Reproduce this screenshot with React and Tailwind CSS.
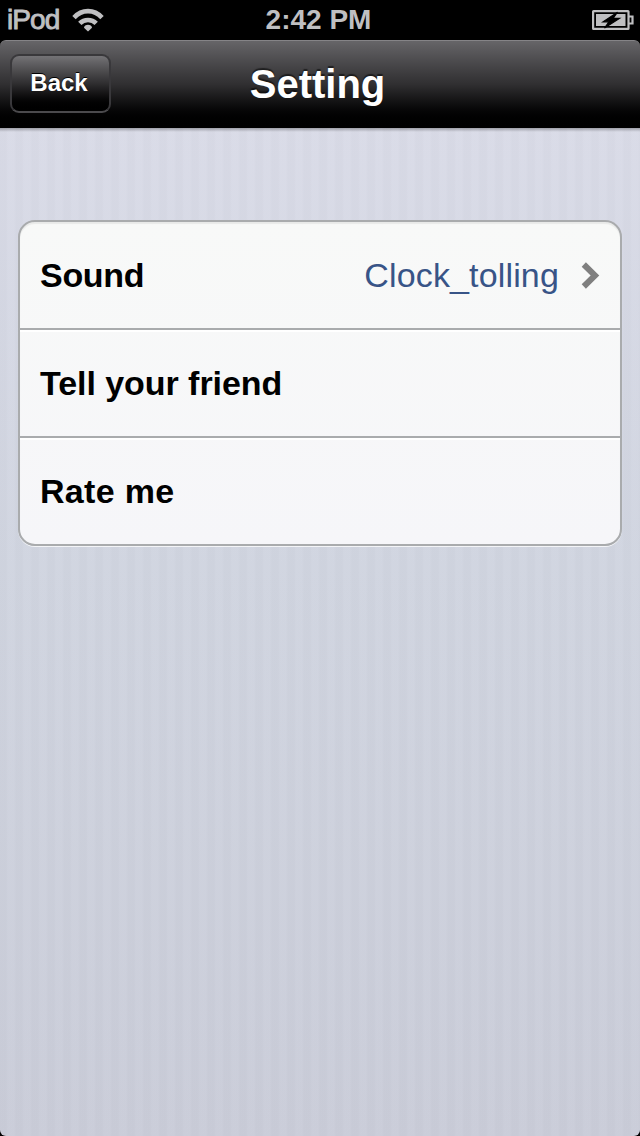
const rows = [
  { label: 'Sound', value: 'Clock_tolling', spacing: 'tracking-[-0.3px]' },
  { label: 'Tell your friend', spacing: 'tracking-[-0.05px]' },
  { label: 'Rate me', spacing: 'tracking-[0.3px]' },
];

function WifiIcon() {
  return (
    <svg width="32" height="24" viewBox="0 0 32 24" fill="none" stroke="#bfbfc1" strokeWidth="4.6">
      <path d="M2 9.6C9.8 1 22.2 1 30 9.6" />
      <path d="M7.8 15.4C12.2 10.8 19.8 10.8 24.2 15.4" />
      <path d="M16 23.6L12 19.8C12 15.6 20 15.6 20 19.8Z" fill="#bfbfc1" stroke="none" />
    </svg>
  );
}

function BatteryIcon() {
  return (
    <svg width="42" height="20" viewBox="0 0 42 20">
      <rect x="1.1" y="1.1" width="35.4" height="17.8" rx="0.5" fill="#000" stroke="#bfbfc1" strokeWidth="2.2" />
      <path d="M37 6.5H40.5V13.5H37" fill="none" stroke="#bfbfc1" strokeWidth="2.2" />
      <rect x="4" y="4" width="29.5" height="12" fill="#bfbfc1" />
      <path d="M25.5 2.2L11 11.8H17L12.5 18L27.5 8.4H21Z" fill="#000" stroke="#000" strokeWidth="1.2" />
    </svg>
  );
}

function StatusBar() {
  return (
    <div className="grid h-10 grid-cols-3 items-center bg-black pl-[7px] pr-[6px] text-[28px] leading-[38px] text-[#bfbfc1]">
      <div className="flex items-center gap-[13px]">
        <span className="tracking-[-0.9px] [-webkit-text-stroke:0.9px_#bfbfc1]">iPod</span>
        <WifiIcon />
      </div>
      <span className="pr-1 text-center font-bold">2:42 PM</span>
      <div className="flex justify-end">
        <BatteryIcon />
      </div>
    </div>
  );
}

function NavBar() {
  return (
    <div className="bg-black">
      <div className="grid h-[88px] grid-cols-[1fr_auto_1fr] items-center rounded-t-[6px] border-t border-[#858487] bg-linear-to-b from-[#666568] via-[#302f31] via-50% to-black px-[10px] pb-[2px] text-white">
        <button className="h-[59px] w-[101px] rounded-[9px] border-2 border-[#39383b] border-b-[#4b4a4d] bg-linear-to-b from-[#747376] via-[#2f2e30] via-50% to-black pr-[3px] pb-[2px] text-2xl font-bold text-shadow-[0_-1px_0_#000]">
          Back
        </button>
        <h1 className="pr-[5px] text-[40px] font-bold leading-none text-shadow-[0_-2px_1px_#0008]">Setting</h1>
      </div>
    </div>
  );
}

export default function App() {
  return (
    <div className="bg-black font-['Liberation_Sans',Arial,sans-serif]">
      <div className="flex h-[1136px] w-[640px] flex-col overflow-hidden rounded-b-[6px] bg-linear-to-b from-[#dadbe7] from-10% via-[#d0d4df] via-50% to-[#c9cbd7]">
        <StatusBar />
        <NavBar />
        {/* soft pinstripes behind the table */}
        <main className="flex-1 bg-[repeating-linear-gradient(90deg,#bcc4d018_0px,#bcc4d018_6px,#dce4f018_8px,#dce4f018_14px,#bcc4d018_16px)]">
          <div className="h-1 bg-linear-to-b from-[#00000045] to-transparent" />
          <ul className="mx-[18px] mt-[88px] overflow-hidden rounded-[17px] border-2 border-[#a9abad] bg-linear-to-b from-[#f8f9f8] to-[#f6f6f9] shadow-[0_1px_0_#ffffffc0,inset_0_2px_1px_#00000010]">
            {rows.map((row) => (
              <li
                key={row.label}
                className="flex h-[108px] items-center border-b-2 border-[#a9abad] px-5 text-[34px] shadow-[inset_0_2px_0_#fff] first:shadow-none last:h-[106px] last:border-b-0"
              >
                <span className={`font-bold text-black ${row.spacing}`}>{row.label}</span>
                {row.value && (
                  <div className="ml-auto flex items-center gap-[22px]">
                    <span className="tracking-[0.15px] text-[#385487]">{row.value}</span>
                    <svg width="19" height="27" viewBox="0 0 19 27" fill="none" stroke="#7f7f7f" strokeWidth="6">
                      <path d="M2.8 2.5L14 13.5L2.8 24.5" />
                    </svg>
                  </div>
                )}
              </li>
            ))}
          </ul>
        </main>
      </div>
    </div>
  );
}
